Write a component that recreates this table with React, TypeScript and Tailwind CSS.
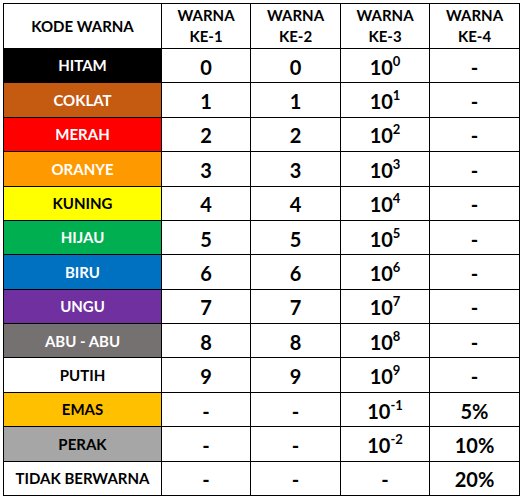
import React from 'react'

type Row = {
  name: string
  bg: string
  text: string
  d1: string
  d2: string
  exp: string | null
  tol: string
}

const rows: Row[] = [
  { name: 'HITAM', bg: 'bg-[#000000]', text: 'text-white', d1: '0', d2: '0', exp: '0', tol: '-' },
  { name: 'COKLAT', bg: 'bg-[#c55a11]', text: 'text-white', d1: '1', d2: '1', exp: '1', tol: '-' },
  { name: 'MERAH', bg: 'bg-[#ff0000]', text: 'text-white', d1: '2', d2: '2', exp: '2', tol: '-' },
  { name: 'ORANYE', bg: 'bg-[#ff9900]', text: 'text-white', d1: '3', d2: '3', exp: '3', tol: '-' },
  { name: 'KUNING', bg: 'bg-[#ffff00]', text: 'text-black', d1: '4', d2: '4', exp: '4', tol: '-' },
  { name: 'HIJAU', bg: 'bg-[#00b050]', text: 'text-white', d1: '5', d2: '5', exp: '5', tol: '-' },
  { name: 'BIRU', bg: 'bg-[#0070c0]', text: 'text-white', d1: '6', d2: '6', exp: '6', tol: '-' },
  { name: 'UNGU', bg: 'bg-[#7030a0]', text: 'text-white', d1: '7', d2: '7', exp: '7', tol: '-' },
  { name: 'ABU - ABU', bg: 'bg-[#767171]', text: 'text-white', d1: '8', d2: '8', exp: '8', tol: '-' },
  { name: 'PUTIH', bg: 'bg-white', text: 'text-black', d1: '9', d2: '9', exp: '9', tol: '-' },
  { name: 'EMAS', bg: 'bg-[#ffc000]', text: 'text-black', d1: '-', d2: '-', exp: '-1', tol: '5%' },
  { name: 'PERAK', bg: 'bg-[#a6a6a6]', text: 'text-black', d1: '-', d2: '-', exp: '-2', tol: '10%' },
  { name: 'TIDAK BERWARNA', bg: 'bg-white', text: 'text-black', d1: '-', d2: '-', exp: null, tol: '20%' },
]

const Cell: React.FC<{ children: React.ReactNode }> = ({ children }) => (
  <div className="bg-white flex items-center justify-center text-[20px] pt-[2px]">{children}</div>
)

export default function App() {
  return (
    <div className="w-[524px] h-[501px] bg-white pl-[3px] pt-[3px] font-['Lato',sans-serif] font-bold text-black">
      <div className="w-[517px] h-[493px] bg-black p-px grid grid-cols-[157px_88px_89px_88px_89px] grid-rows-[44px_repeat(13,1fr)] gap-px">
        {/* header */}
        <div className="bg-white flex items-center justify-center text-[15px]">KODE WARNA</div>
        {['KE-1', 'KE-2', 'KE-3', 'KE-4'].map((k) => (
          <div key={k} className="bg-white flex flex-col items-center justify-center text-[15px] leading-[21px]">
            <span>WARNA</span>
            <span>{k}</span>
          </div>
        ))}

        {rows.map((r) => (
          <React.Fragment key={r.name}>
            <div className={`${r.bg} ${r.text} flex items-center justify-center text-[15px]`}>{r.name}</div>
            <Cell>{r.d1}</Cell>
            <Cell>{r.d2}</Cell>
            <Cell>
              {r.exp === null ? (
                '-'
              ) : (
                <span>
                  10<sup className="text-[13px] -top-[9px]">{r.exp}</sup>
                </span>
              )}
            </Cell>
            <Cell>{r.tol}</Cell>
          </React.Fragment>
        ))}
      </div>
    </div>
  )
}
